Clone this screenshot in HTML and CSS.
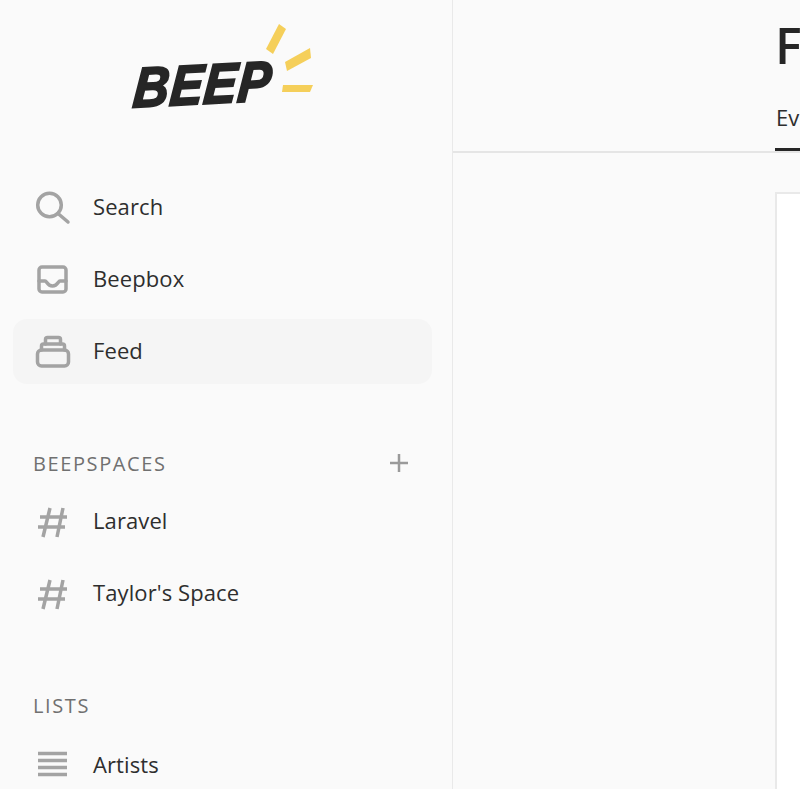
FILE: index.html
```html
<!DOCTYPE html>
<html lang="en">
<head>
    <meta charset="UTF-8">
    <meta name="viewport" content="width=device-width, initial-scale=1.0">
    <title>Beep</title>
    <link rel="stylesheet" href="styles.css">
</head>
<body>

<div class="app">
    <aside class="sidebar">
        <!-- Logo -->
        <div class="logo">
            <span class="logo-text">BEEP</span>
            <svg class="logo-rays" width="50" height="72" viewBox="0 0 50 72">
                <polygon points="14,1 21,6 8,31 1,26" fill="#f5cf5a"/>
                <polygon points="45,25 46,35 22,48 20,39" fill="#f5cf5a"/>
                <polygon points="18,62 48,62 45,69 17,69" fill="#f5cf5a"/>
            </svg>
        </div>

        <nav class="nav">
            <a class="nav-item">
                <svg class="nav-icon" viewBox="0 0 34 34"><circle cx="13.500" cy="16" r="11.800"/><path d="M22 24.500 L32 33"/></svg>
                Search
            </a>
            <a class="nav-item">
                <svg class="nav-icon" viewBox="0 0 34 34"><rect x="3" y="6" width="27" height="25" rx="3"/><path d="M3 20 H9 C11 20 11 25 16.500 25 C22 25 22 20 24 20 H30"/></svg>
                Beepbox
            </a>
            <a class="nav-item active">
                <svg class="nav-icon" viewBox="0 0 34 34"><rect x="1.500" y="17" width="31" height="16" rx="4"/><path d="M5.500 17 V13 Q5.500 11 7.500 11 H26.500 Q28.500 11 28.500 13 V17"/><path d="M9.500 11 V6.500 Q9.500 4.500 11.500 4.500 H22.500 Q24.500 4.500 24.500 6.500 V11"/></svg>
                Feed
            </a>
        </nav>

        <div class="section spaces">
            <div class="section-head">
                <span>BEEPSPACES</span>
                <svg class="plus" width="18" height="18" viewBox="0 0 18 18"><path d="M9 0 V18 M0 9 H18"/></svg>
            </div>
            <a class="nav-item">
                <svg class="nav-icon thin" viewBox="0 0 34 34"><path d="M14 5 L7 34 M27 5 L21 34 M4 14 H31 M2 24 H29"/></svg>
                Laravel
            </a>
            <a class="nav-item">
                <svg class="nav-icon thin" viewBox="0 0 34 34"><path d="M14 5 L7 34 M27 5 L21 34 M4 14 H31 M2 24 H29"/></svg>
                Taylor's Space
            </a>
        </div>

        <div class="section lists">
            <div class="section-head">
                <span>LISTS</span>
            </div>
            <a class="nav-item">
                <svg class="nav-icon thin" viewBox="0 0 34 34"><path d="M2 6.500 H31 M2 13.500 H31 M2 20.500 H31 M2 27.500 H31"/></svg>
                Artists
            </a>
        </div>
    </aside>

    <main class="main">
        <header class="main-header">
            <h1>Feed</h1>
            <div class="tabs">
                <a class="tab active">Everything</a>
            </div>
        </header>
        <div class="content">
            <div class="card"></div>
        </div>
    </main>
</div>

</body>
</html>
```

FILE: styles.css
```css
html, body { margin: 0; padding: 0; height: 100%; overflow: hidden; }
body { font-family: "Open Sans", "Noto Sans", sans-serif; background-color: #fafafa; color: #2a2a2a; }
svg { display: block; }

.app { display: flex; height: 789px; width: 800px; overflow: hidden; }

.sidebar { width: 453px; flex-shrink: 0; box-sizing: border-box; border-right: 1px solid #e9e9e9; padding: 0 20px 0 13px; }

.logo { position: relative; height: 175px; }
.logo-text { position: absolute; left: 118px; top: 64px; font-family: "Liberation Sans", sans-serif; font-size: 49px; font-weight: 700; font-style: italic; letter-spacing: 1px; line-height: 56px; color: #262626; -webkit-text-stroke: 2px #262626; transform: skewX(-8deg) rotate(-3deg) scaleY(1.15); transform-origin: left bottom; }
.logo-rays { position: absolute; left: 252px; top: 23px; }

.nav { display: flex; flex-direction: column; gap: 7px; }
.nav-item { display: flex; align-items: center; box-sizing: border-box; height: 65px; padding: 0 0 4px 23px; gap: 23px; border-radius: 14px; font-size: 22px; letter-spacing: 0.100px; color: #2e2e2e; white-space: nowrap; }
.nav-item.active { background-color: #f5f5f5; }
.nav-icon { width: 34px; height: 34px; flex-shrink: 0; fill: none; stroke: #a3a3a3; stroke-width: 3.500; stroke-linecap: round; stroke-linejoin: round; overflow: visible; }
.nav-icon.thin { stroke-width: 3.500; stroke-linecap: butt; }

.section { display: flex; flex-direction: column; gap: 7px; }
.section-head { display: flex; align-items: center; justify-content: space-between; padding: 0 24px 0 20px; height: 24px; font-size: 20px; letter-spacing: 1.600px; color: #707070; }
.plus { fill: none; stroke: #9a9a9a; stroke-width: 2.500; }
.spaces { margin-top: 67px; }
.spaces .section-head { margin-bottom: 6px; }
.spaces .nav-item { padding-bottom: 2px; }
.lists { margin-top: 68px; }
.lists .section-head { margin-bottom: 8px; }
.lists .nav-item { padding-bottom: 2px; }

.main { flex: 1; min-width: 0; overflow: hidden; }
.main-header { height: 151px; border-bottom: 2px solid #e5e5e5; padding-left: 322px; }
.main-header h1 { margin: 0; padding-top: 16px; height: 75px; box-sizing: border-box; font-size: 50px; line-height: 58px; font-weight: 600; color: #262626; white-space: nowrap; }
.tabs { display: flex; height: 76px; }
.tab { display: block; height: 76px; box-sizing: border-box; padding: 26px 0 0 1px; border-bottom: 3px solid #262626; font-size: 22px; line-height: 32px; white-space: nowrap; color: #2e2e2e; }

.content { padding: 39px 0 0 322px; }
.card { width: 600px; height: 700px; background: #fff; border: 2px solid #e9e9e9; }
```
